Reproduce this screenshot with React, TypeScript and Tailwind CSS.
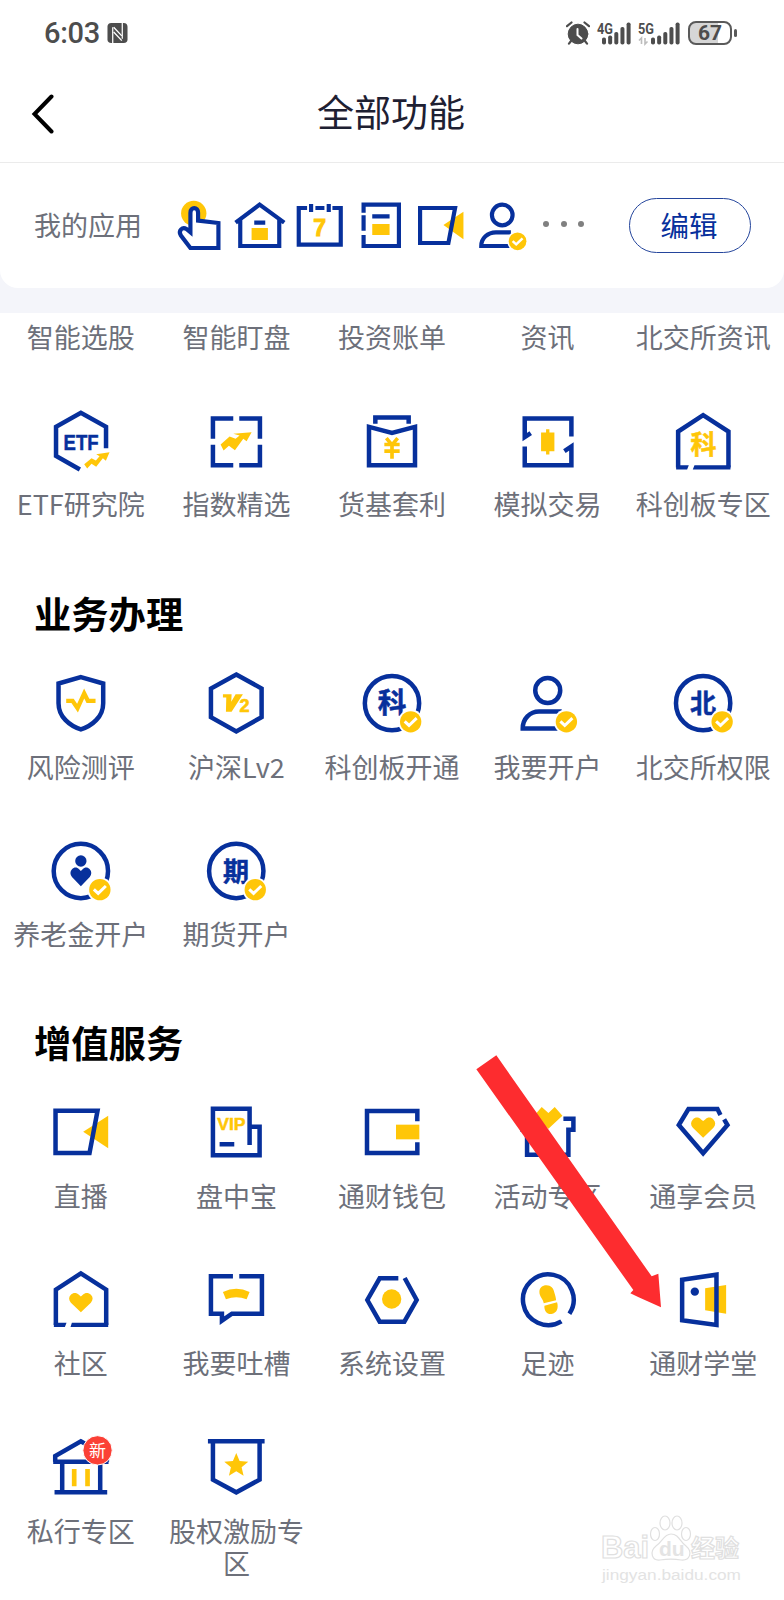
import type { ReactNode } from "react";

const BLUE = "#07309c";
const GOLD = "#ffc608";
const CJK = "'Noto Sans CJK SC', sans-serif";

function Icon({ box, children }: { box: string; children: ReactNode }) {
  return (
    <svg viewBox={box} className="block size-16 overflow-visible" fill="none" stroke={BLUE} strokeWidth="13.5">
      {children}
    </svg>
  );
}

function MiniIcon({ box, children }: { box: string; children: ReactNode }) {
  return (
    <svg viewBox={box} className="block h-[60px] w-[60.5px] overflow-visible" fill="none" stroke={BLUE} strokeWidth="12.5">
      {children}
    </svg>
  );
}

function Check({ x, y, r = 32 }: { x: number; y: number; r?: number }) {
  const k = r / 32;
  return (
    <g transform={`translate(${x} ${y}) scale(${k})`} stroke="none">
      <circle r="37.5" fill="#fff" />
      <circle r="32" fill={GOLD} />
      <path d="M-18 -1L-5 11L18 -11" fill="none" stroke="#fff" strokeWidth="9" />
    </g>
  );
}

function Glyph({ x, y, size, fill, children }: { x: number; y: number; size: number; fill: string; children: string }) {
  return (
    <text x={x} y={y + size * 0.375} fontSize={size} fontWeight="700" fontFamily={CJK} textAnchor="middle" fill={fill} stroke={fill} strokeWidth="1.5">
      {children}
    </text>
  );
}

function Heart({ x, y, w, h, fill }: { x: number; y: number; w: number; h: number; fill: string }) {
  return (
    <path
      transform={`translate(${x} ${y}) scale(${w / 72} ${h / 58})`}
      d="M0 29L-30 0C-37 -8 -37 -17 -30 -24C-23 -31 -13 -31 -6 -24L0 -19L6 -24C13 -31 23 -31 30 -24C37 -17 37 -8 30 0Z"
      fill={fill}
      stroke="none"
    />
  );
}

type Entry = { label: string; icon?: ReactNode };

const invest: Entry[] = [
  {
    label: "ETF研究院",
    icon: (
      <Icon box="146.4 55.5 192 192">
        <path d="M317.500 173V109L242 67L167.500 109V196L239 237" />
        <text x="190" y="177" fontSize="66" fontWeight="700" fontFamily="'Liberation Sans', sans-serif" textLength="105" lengthAdjust="spacingAndGlyphs" fill={BLUE} stroke={BLUE} strokeWidth="1.5">ETF</text>
        <path d="M252 221L274 203L287 210L298 197L288 191L328 185L317 211L308 203L288 229L274 220L261 234Z" fill={GOLD} stroke="none" />
      </Icon>
    ),
  },
  {
    label: "指数精选",
    icon: (
      <Icon box="613.2 55.5 192 192">
        <path d="M640 145V84H701M719 84H781V145M781 163V224H719M701 224H640V163" />
        <path d="M663 162L690 138L708 145L720 135L701 130L756 125L741 152L731 145L706 179L688 166L672 180Z" fill={GOLD} stroke="none" />
      </Icon>
    ),
  },
  {
    label: "货基套利",
    icon: (
      <Icon box="1080 55.5 192 192">
        <path d="M1107 109L1176 127L1245 109V224H1107Z" />
        <path d="M1126 100V81H1226V100" />
        <path d="M1159 143L1176 163L1193 143M1153 162H1199M1153 182H1199M1176 160V205" stroke={GOLD} strokeWidth="11" />
      </Icon>
    ),
  },
  {
    label: "模拟交易",
    icon: (
      <Icon box="370.8 55.5 192 192">
        <path d="M415 128L397 140V84H537V138M397 168V224H537V168L516 182" />
        <path d="M446 126H461V116H471V126H486V182H471V192H461V182H446Z" fill={GOLD} stroke="none" />
      </Icon>
    ),
  },
  {
    label: "科创板专区",
    icon: (
      <Icon box="837.6 55.5 192 192">
        <path d="M859 231V123L934 74L1010 123V231" />
        <path d="M853 224H891L886 237H853ZM908 224H1016V237H903Z" fill={BLUE} stroke="none" />
        <Glyph x={935} y={161} size={78} fill={GOLD}>科</Glyph>
      </Icon>
    ),
  },
];

const business: Entry[] = [
  {
    label: "风险测评",
    icon: (
      <Icon box="146.4 273.6 192 192">
        <path d="M242 292L309 311V370C309 412 275 438 242 449C209 438 175 412 175 370V311Z" />
        <path d="M198 363H217L232 385L252 341L263 363H286" stroke={GOLD} strokeWidth="13" />
      </Icon>
    ),
  },
  {
    label: "沪深Lv2",
    icon: (
      <Icon box="613.2 273.6 192 192">
        <path d="M710 284L786 326V412L710 455L634 412V326Z" />
        <path d="M670 343H696L695 366L708 343H730L696 396H679L680 353H670Z" fill={GOLD} stroke="none" />
        <text x="720" y="396" fontSize="54" fontWeight="700" fontFamily="'Liberation Sans', sans-serif" fill={GOLD} stroke={GOLD} strokeWidth="2">2</text>
      </Icon>
    ),
  },
  {
    label: "科创板开通",
    icon: (
      <Icon box="-96 63.6 192 192">
        <circle cx="0" cy="160" r="81.5" />
        <Glyph x={0} y={157} size={86} fill={BLUE}>科</Glyph>
        <Check x={56} y={216} />
      </Icon>
    ),
  },
  {
    label: "我要开户",
    icon: (
      <Icon box="370.8 63.6 192 192">
        <circle cx="466" cy="122" r="37.5" />
        <path d="M508 185H440C412 185 391 207 391 236H497" />
        <Check x={522} y={216} />
      </Icon>
    ),
  },
  {
    label: "北交所权限",
    icon: (
      <Icon box="837.6 63.6 192 192">
        <circle cx="934" cy="160" r="81.5" />
        <Glyph x={934} y={161} size={78} fill={BLUE}>北</Glyph>
        <Check x={991} y={216} />
      </Icon>
    ),
  },
  {
    label: "养老金开户",
    icon: (
      <Icon box="146.4 56 192 192">
        <circle cx="242" cy="152" r="81.5" />
        <circle cx="242" cy="122" r="17" fill={BLUE} stroke="none" />
        <Heart x={242} y={170} w={64} h={56} fill={BLUE} />
        <Check x={299} y={208} />
      </Icon>
    ),
  },
  {
    label: "期货开户",
    icon: (
      <Icon box="613.2 56 192 192">
        <circle cx="710" cy="152" r="81.5" />
        <Glyph x={709} y={153} size={78} fill={BLUE}>期</Glyph>
        <Check x={767} y={208} />
      </Icon>
    ),
  },
];

const services: Entry[] = [
  {
    label: "直播",
    icon: (
      <Icon box="146.4 32 192 192">
        <path d="M249 127L324 79V177Z" fill={GOLD} stroke="none" />
        <path d="M166 64H292L268 191H166Z" />
      </Icon>
    ),
  },
  {
    label: "盘中宝",
    icon: (
      <Icon box="613.2 32 192 192">
        <path d="M750 167V58H640V198H780V112H750M660 165H704" />
        <text x="653" y="123" fontSize="52" fontWeight="700" fontFamily="'Liberation Sans', sans-serif" textLength="85" lengthAdjust="spacingAndGlyphs" fill={GOLD} stroke={GOLD} strokeWidth="1.5">VIP</text>
      </Icon>
    ),
  },
  {
    label: "通财钱包",
    icon: (
      <Icon box="-96 182 192 192">
        <path d="M76 246V215H-75V341H76V309" />
        <path d="M12 256H82V300H12Z" fill={GOLD} stroke="none" />
      </Icon>
    ),
  },
  {
    label: "活动专区",
    icon: (
      <Icon box="370.8 182 192 192">
        <path d="M513 238H543V271H528V346H404V271H391V238H420" />
        <path d="M448 203L468 221L487 203L510 229L468 268L425 229Z" fill={GOLD} stroke="none" />
      </Icon>
    ),
  },
  {
    label: "通享会员",
    icon: (
      <Icon box="837.6 182 192 192">
        <path d="M986 227L977 209H890L861 257L934 342L1007 257L997 240" />
        <Heart x={934} y={265} w={74} h={60} fill={GOLD} />
      </Icon>
    ),
  },
  {
    label: "社区",
    icon: (
      <Icon box="146.4 534 192 192">
        <path d="M167 705V599L242 550L318 599V705" />
        <path d="M161 698H199L194 711H161ZM215 698H324V711H211Z" fill={BLUE} stroke="none" />
        <Heart x={242} y={638} w={72} h={57} fill={GOLD} />
      </Icon>
    ),
  },
  {
    label: "我要吐槽",
    icon: (
      <Icon box="613.2 534 192 192">
        <path d="M700 559H634V671H667V692L697 671H787V559H719" />
        <path d="M670 606Q710 586 750 606L741 628Q710 616 679 628Z" fill={GOLD} stroke="none" />
      </Icon>
    ),
  },
  {
    label: "系统设置",
    icon: (
      <Icon box="-96 684 192 192">
        <path d="M19 715H-37L-74 780L-37 845H37L74 780L38 714" />
        <circle cx="-1" cy="777" r="29" fill={GOLD} stroke="none" />
      </Icon>
    ),
  },
  {
    label: "足迹",
    icon: (
      <Icon box="370.8 684 192 192">
        <path d="M531 821A76 76 0 1 0 507 844" />
        <path d="M454 790C452 776 441 770 441 756C441 743 450 736 462 736C476 736 483 745 486 758C489 768 491 774 491 781ZM456 797L494 787C499 804 494 820 477 822C463 823 455 812 456 797Z" fill={GOLD} stroke="none" />
      </Icon>
    ),
  },
  {
    label: "通财学堂",
    icon: (
      <Icon box="837.6 684 192 192">
        <path d="M940 745L1003 735V821L940 811Z" fill={GOLD} stroke="none" />
        <path d="M871 719L974 704V855L871 841Z" />
        <circle cx="909" cy="755" r="12.5" fill={BLUE} stroke="none" />
      </Icon>
    ),
  },
  {
    label: "私行专区",
    icon: (
      <Icon box="146.4 78 192 192">
        <path d="M165 158V141L242 97L320 141V158M159 158H325M186 158V250M300 158V250M163 250H321" />
        <path d="M222 180V232M262 180V232" stroke={GOLD} strokeWidth="14" />
        <circle cx="292" cy="124" r="44" fill="#fb4036" stroke="#fff" strokeWidth="3" />
        <text x="292" y="143" fontSize="51" fontFamily={CJK} textAnchor="middle" fill="#fff" stroke="none">新</text>
      </Icon>
    ),
  },
  {
    label: "股权激励专区",
    icon: (
      <Icon box="613.2 78 192 192">
        <path d="M625 97H795M640 97V212L710 250L780 212V97" />
        <path d="M710 132L720 156L746 158L726 175L732 200L710 187L688 200L694 175L674 158L700 156Z" fill={GOLD} stroke="none" />
      </Icon>
    ),
  },
];

function Label({ children }: { children: string }) {
  return <span className="w-[138px] text-center text-[27px] leading-8 text-[#6d707a]">{children}</span>;
}

function Grid({ entries }: { entries: Entry[] }) {
  return (
    <div className="grid grid-cols-5 gap-y-14 px-[3px]">
      {entries.map((e) => (
        <div key={e.label} className="flex flex-col items-center gap-[15.5px]">
          {e.icon}
          <Label>{e.label}</Label>
        </div>
      ))}
    </div>
  );
}

function Signal({ label, arrows }: { label: string; arrows?: boolean }) {
  const tops = [15.5, 13.5, 10, 5, 0.5];
  const start = arrows ? 13 : 5;
  return (
    <svg width={arrows ? 42 : 34} height="23" viewBox={arrows ? "0 0 42 23" : "0 0 34 23"} className="block overflow-visible" fill="#4d4d4d">
      <text x="0" y="11.5" fontSize="15" fontWeight="700" fontFamily="Roboto, sans-serif" textLength="16" lengthAdjust="spacingAndGlyphs">{label}</text>
      {tops.map((t, i) => (
        <rect key={t} x={start + i * 6.15} y={t} width="4" height={22.5 - t} rx="1.8" />
      ))}
      {arrows && <path d="M3.500 22V16L1 18.500M7 16V22L9.500 19.500" fill="none" stroke="#bdbdbd" strokeWidth="1.6" />}
    </svg>
  );
}

function StatusBar() {
  return (
    <div className="flex h-[66px] items-center pr-[47px] pl-[44px] text-[#4d4d4d]">
      <span className="w-[55px] pt-px font-[Roboto] text-[29px] leading-none font-medium tracking-[-0.3px]">6:03</span>
      <svg width="21" height="22" viewBox="0 0 22 22" className="ml-2">
        <rect x="0.5" y="0.5" width="21" height="21" rx="4" fill="#4d4d4d" />
        <path d="M6 22V5M16 17V0" fill="none" stroke="#fff" strokeWidth="1.3" />
        <path d="M7 5L15.500 14M7 10L15.500 19" fill="none" stroke="#fff" strokeWidth="1.4" />
      </svg>
      <div className="ml-auto flex items-center">
        <svg width="24" height="24" viewBox="0 0 24 24" fill="#4d4d4d" stroke="#4d4d4d" strokeLinecap="round">
          <circle cx="12" cy="13" r="9.8" />
          <path d="M1 5.200L5.500 1.500M23 5.200L18.500 1.500M5 20L3 22.600M19 20L21 22.600" fill="none" strokeWidth="2.2" />
          <path d="M11.500 8V14L15.500 17.500" fill="none" stroke="#fff" strokeWidth="2" />
        </svg>
        <div className="ml-[7px]"><Signal label="4G" /></div>
        <div className="ml-[7px]"><Signal label="5G" arrows /></div>
        <div className="ml-2 flex h-6 w-11 items-center justify-center rounded-[8px] border-2 border-[#5a5a5a] bg-linear-to-r from-[#d6d6d6] from-70% to-white to-70% pt-px font-[Roboto] text-[21px] leading-none font-bold">67</div>
        <div className="ml-[2px] h-2 w-[3px] rounded-full bg-[#5a5a5a]" />
      </div>
    </div>
  );
}

function MyApps() {
  return (
    <div className="flex h-[125px] items-center rounded-b-[18px] bg-white pr-[33px] pl-[34px]">
      <span className="-mt-px w-[135.25px] text-[27px] leading-8 text-[#6d707a]">我的应用</span>
      <MiniIcon box="27.75 48 181.5 180">
        <circle cx="102" cy="100" r="38" fill={GOLD} stroke="none" />
        <path d="M92 204L63 166C55 152 68 139 80 147L92 157V98C92 80 115 80 115 98V122L176 129V204Z" fill="#fff" />
      </MiniIcon>
      <MiniIcon box="209.25 48 181.5 180">
        <path d="M226 128L298 74L372 128M240 120V198H357V120M282 128H315" />
        <path d="M274 144H323V180H274Z" fill={GOLD} stroke="none" />
      </MiniIcon>
      <MiniIcon box="390.75 48 181.5 180">
        <path d="M442 84H417V194H543V84H518M467 84H494M454 72V96M507 72V96" />
        <text x="480" y="167" fontSize="69" fontWeight="700" fontFamily="'Liberation Sans', sans-serif" textAnchor="middle" fill={GOLD} stroke={GOLD} strokeWidth="3">7</text>
      </MiniIcon>
      <MiniIcon box="572.25 48 181.5 180">
        <path d="M610 98V74H716V198H610V165M610 106V152M636 109H688" />
        <path d="M636 132H688V165H636Z" fill={GOLD} stroke="none" />
      </MiniIcon>
      <MiniIcon box="33.75 48 181.5 180">
        <path d="M131 135L191 95V178Z" fill={GOLD} stroke="none" />
        <path d="M61 84H166L146 189H61Z" />
      </MiniIcon>
      <MiniIcon box="215.25 48 181.5 180">
        <circle cx="306" cy="105" r="31" />
        <path d="M332 157H287C262 157 243 175 243 198H332" />
        <Check x={352} y={184} r={26.5} />
      </MiniIcon>
      <div className="-mt-1 ml-[11px] flex gap-[11.5px]">
        <i className="size-1.5 rounded-full bg-[#808080]" />
        <i className="size-1.5 rounded-full bg-[#808080]" />
        <i className="size-1.5 rounded-full bg-[#808080]" />
      </div>
      <button className="ml-auto flex h-[55px] w-[122px] items-center justify-center rounded-full border border-[#24459c] pr-0.5 pb-px text-[28.5px] leading-none text-[#07309c]">编辑</button>
    </div>
  );
}

function Watermark() {
  return (
    <svg className="absolute top-[1510px] left-[598px]" width="150" height="76" viewBox="0 0 150 76" fill="#fff" stroke="#e0e0e0" strokeWidth="1.2">
      <g fontFamily="'Liberation Sans', sans-serif">
        <text x="3" y="48" fontSize="32" fontWeight="700" textLength="48" lengthAdjust="spacingAndGlyphs">Bai</text>
        <ellipse cx="57" cy="24" rx="4.5" ry="6.5" />
        <ellipse cx="67" cy="13" rx="5" ry="7" />
        <ellipse cx="79" cy="13" rx="5" ry="7" />
        <ellipse cx="88" cy="24" rx="4.5" ry="6.5" />
        <path d="M73 24C66 24 64 32 58 36C51 42 54 51 62 50C69 49 77 49 83 50C92 51 95 42 88 36C82 32 81 24 73 24Z" />
        <text x="61" y="46" fontSize="21" fill="#e4e4e4" stroke="none" fontWeight="700">du</text>
      </g>
      <text x="93" y="47" fontSize="24" fontWeight="700" fontFamily={CJK}>经验</text>
      <text x="4" y="69.5" fontSize="15.5" fill="#e3e3e3" stroke="none" fontFamily="'Liberation Sans', sans-serif" textLength="139" lengthAdjust="spacingAndGlyphs">jingyan.baidu.com</text>
    </svg>
  );
}

export default function App() {
  return (
    <div className="relative h-[1600px] w-[784px] overflow-hidden bg-white font-['Noto_Sans_CJK_SC',sans-serif]">
      <StatusBar />
      <header className="grid h-[97px] grid-cols-[100px_1fr_100px] items-center border-b border-[#ebebeb]">
        <svg width="24" height="40" viewBox="0 0 24 40" className="ml-[31px]" fill="none" stroke="#000" strokeWidth="4" strokeLinecap="round">
          <path d="M20.500 2.500L3.500 20L20.500 37.500" />
        </svg>
        <h1 className="-mt-1.5 pr-0.5 text-center text-[37px] leading-none text-[#1e2032]">全部功能</h1>
      </header>
      <div className="h-[150px] bg-[#f4f5fa]">
        <MyApps />
      </div>
      <div className="grid grid-cols-5 justify-items-center px-[3px] pt-[7.5px]">
        {["智能选股", "智能盯盘", "投资账单", "资讯", "北交所资讯"].map((t) => (
          <Label key={t}>{t}</Label>
        ))}
      </div>
      <div className="h-14" />
      <Grid entries={invest} />
      <h2 className="mt-[70.5px] mb-[36.5px] pl-[34px] text-[37.3px] leading-[44px] font-bold text-black">业务办理</h2>
      <Grid entries={business} />
      <h2 className="mt-[69.5px] mb-[36.5px] pl-[34px] text-[37.3px] leading-[44px] font-bold text-black">增值服务</h2>
      <Grid entries={services} />
      <svg className="absolute top-[1040px] left-[392px]" width="280" height="280" viewBox="0 0 840 840">
        <path d="M313 46L779 709L799 701L807 802L740 772L715 760L724 750L253 88Z" fill="#fd2c2f" />
      </svg>
      <Watermark />
    </div>
  );
}
